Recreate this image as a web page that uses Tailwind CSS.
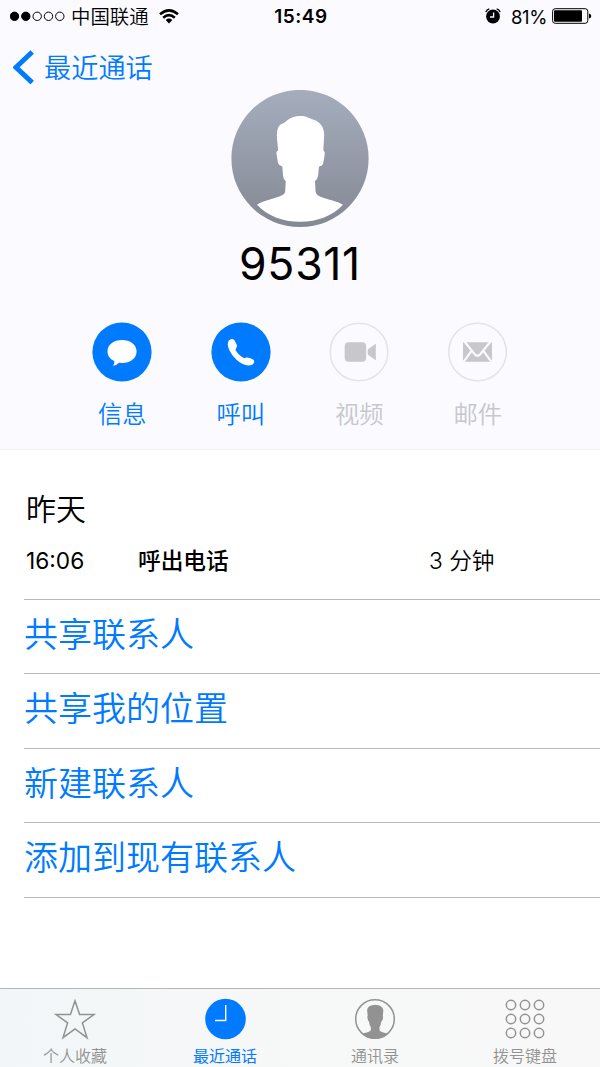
<!DOCTYPE html>
<html lang="zh-CN">
<head>
<meta charset="utf-8">
<title>最近通话</title>
<script src="https://cdn.jsdelivr.net/npm/@tailwindcss/browser@4"></script>
</head>
<body class="w-[600px] h-[1067px] overflow-hidden bg-white text-black font-['Inter','Noto_Sans_CJK_SC',sans-serif] font-[350]">
<div class="flex flex-col w-[600px] h-[1067px]">
  <header class="flex flex-col h-[450px] shrink-0 bg-[#fafaff] border-b border-[#f2f2f5]">
    <div class="grid grid-cols-[1fr_auto_1fr] items-center h-8 pl-[10px] pr-[8px]">
      <div class="flex items-center">
        <svg class="w-[55px] h-[12px]" viewBox="0 0 55 12"><g stroke="#000" stroke-width="1"><circle cx="4.5" cy="6.3" r="4.2"/><circle cx="15.8" cy="6.3" r="4.2"/><g fill="none"><circle cx="27.2" cy="6.3" r="4.2"/><circle cx="38.5" cy="6.3" r="4.2"/><circle cx="49.8" cy="6.3" r="4.2"/></g></g></svg>
        <span class="ml-[6px] pt-[2px] text-[19.4px] leading-[30px] whitespace-nowrap">中国联通</span>
        <svg class="ml-[10px] w-[20px] h-[15px]" viewBox="0 0 20 15"><g fill="none" stroke="#000" stroke-width="2.5"><path d="M1 5.3Q10 -2.6 19 5.3"/><path d="M4.2 8.7Q10 3.6 15.8 8.7"/></g><path d="M6.7 11Q10 8.2 13.3 11L10 14.4Z"/></svg>
      </div>
      <div class="pt-[2px] text-[19px] font-semibold leading-[30px] tracking-[0.5px]">15:49</div>
      <div class="flex items-center justify-end">
        <svg class="w-[16px] h-[16px]" viewBox="0 0 16 16"><circle cx="8" cy="8.5" r="6.9"/><path d="M.8 4.1Q1.7 1.6 4.3.9M15.2 4.1Q14.3 1.6 11.7.9" fill="none" stroke="#000" stroke-width="1.3"/><path d="M8.6 4.6V9H5" fill="none" stroke="#fafaff" stroke-width="1.3"/></svg>
        <span class="ml-[10px] pt-[2px] text-[18.5px] font-normal leading-[30px] tracking-[-0.4px]">81%</span>
        <svg class="ml-[5px] w-[40px] h-[16px]" viewBox="0 0 40 16"><rect x=".6" y=".7" width="35.2" height="14.6" rx="2.6" fill="none" stroke="#000"/><rect x="2" y="2.2" width="28" height="11.6" rx="1"/><path d="M37 5.4Q39.3 6 39.3 8T37 10.6Z"/></svg>
      </div>
    </div>
    <a class="flex items-center h-[58px] pl-[13px] pt-[12px] text-[#007aff]">
      <svg class="w-[22px] h-[34px]" viewBox="0 0 22 34"><path d="M19.2 2L3 17.3L19.2 32.6" fill="none" stroke="#007aff" stroke-width="5"/></svg>
      <span class="ml-[9px] pt-[3px] text-[27.2px] leading-[40px]">最近通话</span>
    </a>
    <div class="flex flex-col items-center">
      <svg class="w-[138px] h-[138px]" viewBox="0 0 138 138">
        <defs><linearGradient id="disc" x1="0" y1="0" x2="0" y2="1"><stop offset="0" stop-color="#a5adbd"/><stop offset="1" stop-color="#848893"/></linearGradient></defs>
        <circle cx="69" cy="68.5" r="68.6" fill="url(#disc)"/>
        <path fill="#fff" d="M69.500 26C76 26 77 28 82 29.500C90 32 93.200 38 93.200 45L92.300 60.500Q94.300 61 93.500 66L92 74Q91 76 88 76.500L87.200 85Q86.500 89.500 84 91L84.500 101Q85 105 89 106.500C98 110 106 111 112 114.700C101 126 87 131.700 69 131.700S37 126 26 114.700C33 110 43 109 50.500 105.500Q54 104 54.200 101L54.800 91Q52.500 90 52 85L51.300 76.500Q48 76 47 73L45.500 64Q45 61 47.200 60.500L46 49C45.500 38 47.500 34.500 53 33C59 28 62 26 69.500 26Z"/>
      </svg>
      <h1 class="h-[74px] text-[44.5px] leading-[73px] font-normal tracking-[0.7px]">95311</h1>
    </div>
    <div class="grid grid-cols-4 w-[474px] ml-[63px] mt-[20px] text-[24.3px] leading-[36px] text-[#007aff] text-center">
      <div class="flex flex-col items-center"><svg class="w-[60px] h-[60px] mb-[14px]" viewBox="0 0 60 60"><circle cx="30" cy="30" r="29.600" fill="#007aff"/><path fill="#fff" d="M30 18C38.300 18 44.600 22.700 44.600 29.500S38.300 41 30 41L26.800 40.800C25 43 22.500 43.700 20.800 43.600C22 42.500 22.500 41.200 22.300 39.100C18.200 37.200 15.500 33.800 15.500 29.500C15.500 22.700 21.700 18 30 18Z"/></svg><span>信息</span></div>
      <div class="flex flex-col items-center"><svg class="w-[60px] h-[60px] mb-[14px]" viewBox="0 0 60 60"><circle cx="30" cy="30" r="29.600" fill="#007aff"/><path fill="#fff" d="M18 18.300Q20.500 16.200 22.300 17.200C24 18.500 25.500 21.500 26 23.800C26.200 25.300 24.700 26.500 24.500 28C26 31 29.500 34.500 32.800 36C34.300 36.500 35 35.300 36.500 35.500C39 35.900 41.500 37 42.900 38.200C43.700 39.500 42.900 41.800 41.200 42.700C36.500 45 30 42 25.500 37.800C20 32.500 14.200 23.500 18 18.300Z"/></svg><span>呼叫</span></div>
      <div class="flex flex-col items-center text-[#c7c7cc]"><svg class="w-[60px] h-[60px] mb-[14px]" viewBox="0 0 60 60"><circle cx="30" cy="30" r="28.800" fill="none" stroke="#e3e3e8" stroke-width="1.500"/><rect x="15.700" y="20.300" width="21.400" height="19.500" rx="4" fill="#c7c7cc"/><path d="M38.700 27.500L46.800 21.700V38.300L38.700 32.500Z" fill="#c7c7cc"/></svg><span>视频</span></div>
      <div class="flex flex-col items-center text-[#c7c7cc]"><svg class="w-[60px] h-[60px] mb-[14px]" viewBox="0 0 60 60"><circle cx="29.500" cy="30" r="28.800" fill="none" stroke="#e3e3e8" stroke-width="1.500"/><path d="M15 20.300H44V39.800H15Z" fill="#c7c7cc"/><path d="M15.800 18.800L27 32.500Q29.500 35 32 32.500L43.200 18.800M14.800 40.800L23.500 29M44.200 40.800L35.500 29" fill="none" stroke="#fafaff" stroke-width="2.2"/></svg><span>邮件</span></div>
    </div>
  </header>
  <main class="flex flex-col h-[538px] shrink-0 pl-6">
    <section class="h-[149px] pl-[2px] pt-[36px]">
      <h2 class="text-[30px] leading-[46px] font-[350]">昨天</h2>
      <div class="grid grid-cols-[112px_291px_1fr] pt-[11px] text-[22.700px] leading-[36px]">
        <span class="font-normal">16:06</span><span class="font-medium">呼出电话</span><span>3 分钟</span>
      </div>
    </section>
    <ul class="text-[34px] leading-[70px] text-[#007aff] border-b border-[#b9b9bc] h-[298.500px] grid grid-rows-4">
      <li class="border-t border-[#b9b9bc]">共享联系人</li>
      <li class="border-t border-[#b9b9bc]">共享我的位置</li>
      <li class="border-t border-[#b9b9bc]">新建联系人</li>
      <li class="border-t border-[#b9b9bc]">添加到现有联系人</li>
    </ul>
  </main>
  <nav class="grid grid-cols-4 h-[79px] shrink-0 border-t border-[#b5b5b8] bg-linear-to-r from-[#f2f6f8] via-[#f7f8f8] via-50% to-[#f8f8f8] text-[16px] leading-[26px] text-[#929292]">
    <div class="flex flex-col items-center pt-[8px]"><svg class="w-[44px] h-[44px] mb-[2px]" viewBox="0 0 44 44"><path d="M22 3.800L26.600 17.500H41L29.400 25.900L34 40.700L22 31.900L10 40.700L14.600 25.900L3 17.500H17.400Z" fill="none" stroke="#929292" stroke-width="1.500"/></svg><span>个人收藏</span></div>
    <div class="flex flex-col items-center pt-[8px] text-[#007aff] font-normal"><svg class="w-[44px] h-[44px] mb-[2px]" viewBox="0 0 44 44"><circle cx="22.500" cy="22" r="20.300" fill="#007aff"/><path d="M22.700 8V23.500H12" fill="none" stroke="#fff" stroke-width="1.400"/></svg><span>最近通话</span></div>
    <div class="flex flex-col items-center pt-[8px]"><svg class="w-[44px] h-[44px] mb-[2px]" viewBox="0 0 44 44"><circle cx="22" cy="22" r="19.300" fill="none" stroke="#929292" stroke-width="1.500"/><path fill="#929292" d="M22.300 7.800C27 8 30.300 10 30.300 14L29.800 19Q30.500 20 29.500 23Q29 24.500 28.200 24.500Q28 28 26.500 30V33C27 35 31 35.500 35 36.700Q29.500 41.800 22 41.800T9.200 36.700C13 35.500 17 35 17.800 33V30Q16.300 28 16 24.500Q15 24 14.600 21.500Q14 19 14.700 19L14.200 14C14 10 17 8 22.300 7.800Z"/></svg><span>通讯录</span></div>
    <div class="flex flex-col items-center pt-[8px]"><svg class="w-[44px] h-[44px] mb-[2px]" viewBox="0 0 44 44"><g fill="none" stroke="#929292" stroke-width="1.500"><circle cx="8" cy="8" r="4.700"/><circle cx="22" cy="8" r="4.700"/><circle cx="36" cy="8" r="4.700"/><circle cx="8" cy="22" r="4.700"/><circle cx="22" cy="22" r="4.700"/><circle cx="36" cy="22" r="4.700"/><circle cx="8" cy="36" r="4.700"/><circle cx="22" cy="36" r="4.700"/><circle cx="36" cy="36" r="4.700"/></g></svg><span>拨号键盘</span></div>
  </nav>
</div>
</body>
</html>
